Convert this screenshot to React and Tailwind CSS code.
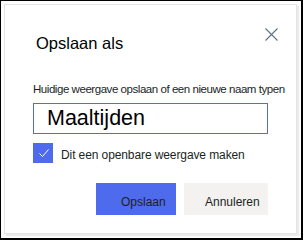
import React, { useState } from "react";

export default function App() {
  const [name, setName] = useState("Maaltijden");
  const [isPublic, setIsPublic] = useState(true);

  return (
    <div
      className="w-[303px] h-[240px] bg-white border-t border-l border-r-2 border-b-2 border-black pt-[3px] pl-[3px]"
      style={{ fontFamily: '"Liberation Sans", Arial, sans-serif' }}
    >
      {/* Dialog */}
      <div className="w-[293px] h-[230px] bg-white border border-[#e3e3e3] shadow-[2px_2px_1px_rgba(0,0,0,0.08)] px-[28px] flex flex-col">
        {/* Header */}
        <div className="flex justify-between items-start pt-[23px]">
          <div className="mt-[4.5px] pl-[3px] text-[16.5px] leading-[20px] text-black">
            Opslaan als
          </div>
          <button className="-mr-[10px] w-[13px] h-[13px]">
            <svg width="13" height="13" viewBox="0 0 13 13">
              <path
                d="M0.5 0.5 L12.5 12.5 M12.5 0.5 L0.5 12.5"
                stroke="#5f6f86"
                strokeWidth="1.1"
                fill="none"
              />
            </svg>
          </button>
        </div>

        {/* Label */}
        <label className="mt-[29.5px] text-[11.5px] leading-[14px] tracking-[-0.45px] text-[#201f1e] whitespace-nowrap">
          Huidige weergave opslaan of een nieuwe naam typen
        </label>

        {/* Input */}
        <input
          type="text"
          value={name}
          onChange={(e) => setName(e.target.value)}
          className="mt-[7px] h-[31px] w-full border border-[#4f6bed] pl-[13px] text-[21.5px] text-black outline-none"
        />

        {/* Checkbox */}
        <div
          className="mt-[9px] flex items-center gap-[8px] cursor-pointer"
          onClick={() => setIsPublic(!isPublic)}
        >
          <div className="w-[20px] h-[20px] bg-[#4f6bed] flex items-center justify-center">
            {isPublic && (
              <svg width="20" height="20" viewBox="0 0 20 20">
                <path
                  d="M6.5 10.5 L9.5 13.5 L15.5 6.5"
                  stroke="#ffffff"
                  strokeWidth="1"
                  fill="none"
                />
              </svg>
            )}
          </div>
          <span className="pt-[3px] text-[12px] leading-[16px] tracking-[-0.1px] text-[#201f1e] whitespace-nowrap">
            Dit een openbare weergave maken
          </span>
        </div>

        {/* Buttons */}
        <div className="mt-[20px] flex justify-end gap-[8px]">
          <button className="w-[80px] h-[32px] bg-[#4f6bed] flex items-start pt-[11px] pl-[25px] text-[12px] leading-[16px] text-[#201f1e]">
            Opslaan
          </button>
          <button className="w-[84px] h-[32px] bg-[#f3f2f1] flex items-start pt-[11px] pl-[21px] text-[12px] leading-[16px] text-[#201f1e]">
            Annuleren
          </button>
        </div>
      </div>
    </div>
  );
}
